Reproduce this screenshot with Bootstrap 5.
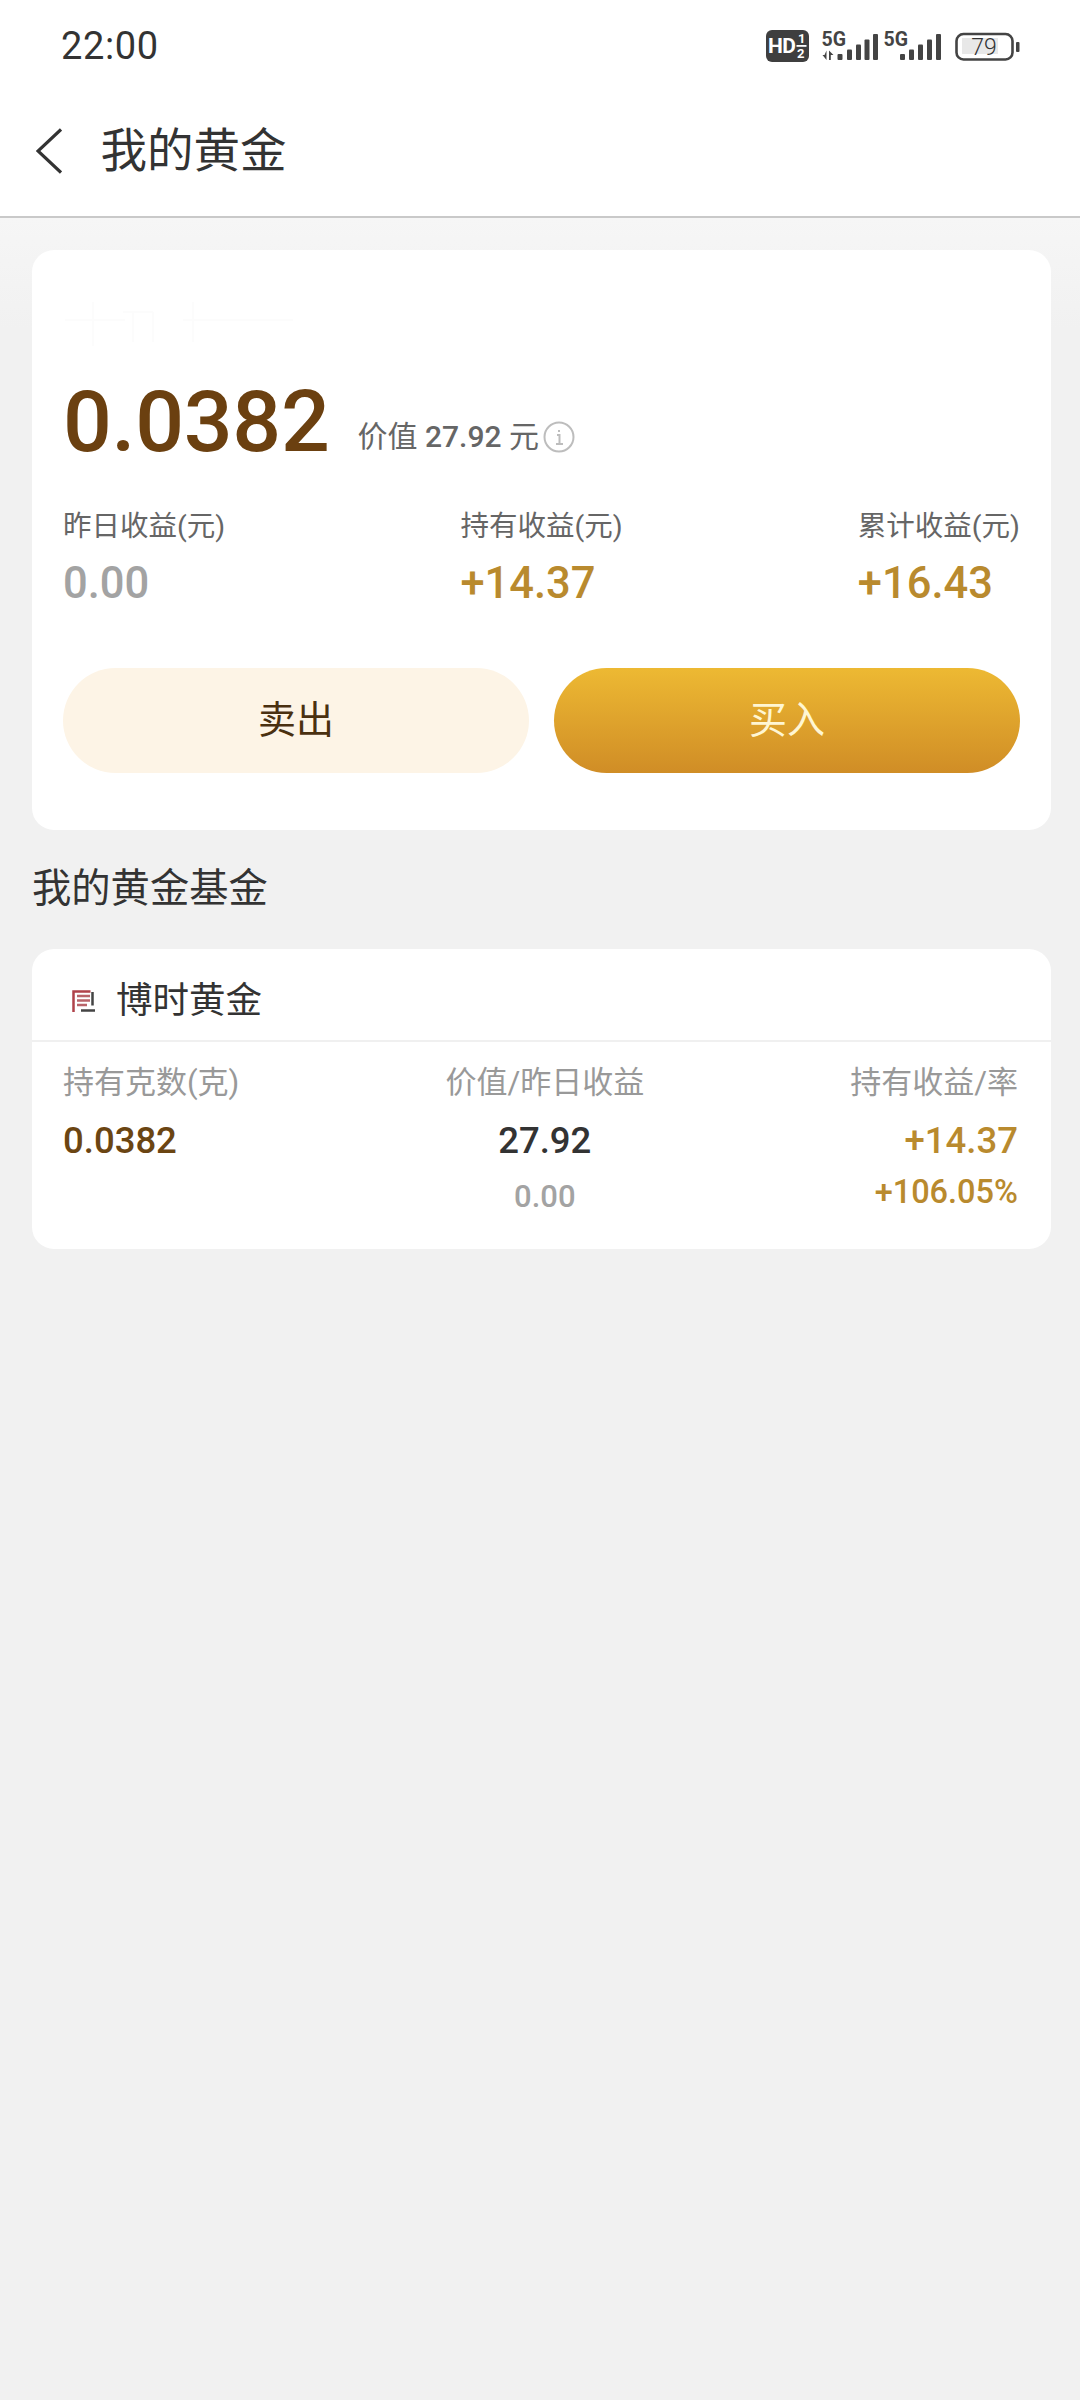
<!DOCTYPE html>
<html lang="zh-CN">
<head>
<meta charset="utf-8">
<meta name="viewport" content="width=device-width, initial-scale=1">
<link href="https://cdn.jsdelivr.net/npm/bootstrap@5.3.0/dist/css/bootstrap.min.css" rel="stylesheet">
<style>
html,body{background:#f1f1f1}
body{font-family:Roboto,"Noto Sans CJK SC",sans-serif;color:#333;width:1080px;min-height:2400px;line-height:1}
.top-zone{background:#fff;height:218px;border-bottom:2px solid #c9c9c9}
.status-line{height:92px;padding:0 60px 0 61px}
.clock{font-size:38px;color:#333;letter-spacing:.6px}
.title-line{height:124px;padding-left:36px;padding-bottom:6px;gap:38.5px}
.page-title{font-size:46.5px;color:#333;font-weight:400;margin:0;line-height:1}
.page-body{background:linear-gradient(#f6f6f6,#f1f1f1 110px);padding:32px 29px 0 32px}
.gold-panel{border:0;border-radius:22px;background:#fff;color:#333}
.panel-main{padding:50px 31px 38px 31px;height:580px}
.mist{height:48px;margin-bottom:37.6px}
.big-num{font-size:86px;font-weight:500;color:#6b4010;line-height:72px;letter-spacing:-.3px}
.big-side{font-size:30px;color:#666;line-height:36px;margin-left:28px;gap:4px;margin-bottom:3px}
.num-mid{font-weight:500}
.stat-row{margin-top:53.4px}
.stat-label{font-size:28.5px;color:#666;line-height:32px}
.stat-val{font-size:43.5px;font-weight:500;line-height:40px;margin-top:21px}
.tone-gray{color:#a3a3a3}.tone-gold{color:#b98a2e}.tone-brown{color:#6b4512}.tone-dark{color:#333}
.act-row{margin-top:64px;gap:25px}
.act-btn{flex:1 1 0;height:105px;border:0;font-size:38px;line-height:1;padding:0}
.act-sell,.act-sell:hover{background:#fdf4e6;color:#4a3010}
.act-buy,.act-buy:hover{background:linear-gradient(#edb933,#d08d26);color:#fff6d2}
.sec-title{font-size:39.3px;font-weight:400;color:#333;margin:39px 0 40px 0;line-height:40px}
.fund-head{height:93px;padding-left:40px;padding-top:14px;gap:21px;border-bottom:2px solid #f0f0f0}
.fund-name{font-size:36.5px;color:#333}
.fund-body{padding:25px 33px 0 31px;height:207px}
.fund-label{font-size:31px;color:#999;line-height:32px}
.fund-val{font-size:36.5px;font-weight:500;line-height:36px;margin-top:23.5px}
.fund-sub{font-size:32.5px;font-weight:500;line-height:36px;margin-top:15.5px}
.fund-sub-low{margin-top:20px;font-size:31px}
</style>
</head>
<body>
<div class="top-zone">
  <div class="status-line d-flex align-items-center justify-content-between">
    <span class="clock">22:00</span>
    <svg width="256" height="36" viewBox="763 27 256 36" role="img" aria-label="状态栏">
      <rect x="765" y="29" width="43" height="32" rx="6" fill="#3f3f3f"/>
      <text x="767" y="52" font-family="Roboto" font-weight="700" font-size="21" fill="#fff" letter-spacing="-.5">HD</text>
      <text x="797" y="42" font-family="Roboto" font-weight="700" font-size="13" fill="#fff">1</text>
      <rect x="795.500" y="44" width="10" height="1.800" fill="#fff"/>
      <text x="796" y="57" font-family="Roboto" font-weight="700" font-size="13" fill="#fff">2</text>
      <text x="820.500" y="45" font-family="Roboto" font-weight="700" font-size="19.500" fill="#444">5G</text>
      <g fill="#444">
        <path d="M825.500 49.500v9.500l-4-5h2zM828 49.500v9.500h1.800v-5h2.700z"/>
        <rect x="836.500" y="53" width="5" height="6" rx="1"/>
        <rect x="846" y="48.500" width="5" height="10.500" rx="1"/>
        <rect x="855" y="43.500" width="5" height="15.500" rx="1"/>
        <rect x="863.500" y="38.500" width="5" height="20.500" rx="1"/>
        <rect x="872" y="33" width="5" height="26" rx="1"/>
      </g>
      <text x="882.500" y="45" font-family="Roboto" font-weight="700" font-size="19.500" fill="#444">5G</text>
      <g fill="#444">
        <rect x="899" y="53" width="5" height="6" rx="1"/>
        <rect x="908" y="48.500" width="5" height="10.500" rx="1"/>
        <rect x="917" y="43.500" width="5" height="15.500" rx="1"/>
        <rect x="926" y="38.500" width="5" height="20.500" rx="1"/>
        <rect x="935" y="33" width="5" height="26" rx="1"/>
      </g>
      <rect x="955.500" y="33" width="56" height="25.500" rx="7" fill="none" stroke="#444" stroke-width="2.600"/>
      <rect x="961" y="37" width="36" height="16" fill="#e8e8e8"/>
      <rect x="1015" y="41" width="3.500" height="10" rx="1" fill="#444"/>
      <text x="983" y="54" text-anchor="middle" font-family="Roboto" font-weight="300" font-size="23" fill="#333">79</text>
    </svg>
  </div>
  <div class="title-line d-flex align-items-center">
    <svg width="26" height="46" viewBox="0 0 26 46" fill="none" stroke="#333" stroke-width="3.200"><path d="M25 1.500L2 23l23 21.500"/></svg>
    <h1 class="page-title">我的黄金</h1>
  </div>
</div>
<main class="page-body">
  <section class="card gold-panel panel-main">
    <svg class="mist d-block" width="240" height="48" viewBox="0 0 240 48" fill="none" stroke="#fcfcfc" stroke-width="2"><path d="M2 20h60M30 2v44M60 12h30M70 12v30M90 12v30M130 2v40M120 20h50M170 20h60"/></svg>
    <div class="d-flex align-items-end">
      <span class="big-num">0.0382</span>
      <div class="big-side d-flex align-items-center">
        <span>价值 <span class="num-mid">27.92</span> 元</span>
        <svg width="32" height="32" viewBox="0 0 32 32" fill="none" stroke="#bdbdbd" stroke-width="2"><circle cx="16" cy="16" r="14.500"/><path d="M14 14h2.500v9M13 23h7M16 9v2"/></svg>
      </div>
    </div>
    <div class="stat-row d-flex justify-content-between">
      <div><div class="stat-label">昨日收益(元)</div><div class="stat-val tone-gray">0.00</div></div>
      <div><div class="stat-label">持有收益(元)</div><div class="stat-val tone-gold">+14.37</div></div>
      <div><div class="stat-label">累计收益(元)</div><div class="stat-val tone-gold">+16.43</div></div>
    </div>
    <div class="act-row d-flex">
      <button type="button" class="btn rounded-pill act-btn act-sell">卖出</button>
      <button type="button" class="btn rounded-pill act-btn act-buy">买入</button>
    </div>
  </section>
  <h2 class="sec-title">我的黄金基金</h2>
  <section class="card gold-panel">
    <div class="fund-head d-flex align-items-center">
      <svg width="23" height="23" viewBox="0 0 23 23" fill="none" stroke-width="2.500"><path d="M1.500 22V1.500h17" stroke="#b0424a"/><path d="M5 6h13M5 10.500h13M5 15h10" stroke="#b9646a"/><path d="M20.500 2v13.500M9 20.500h14" stroke="#444"/></svg>
      <span class="fund-name">博时黄金</span>
    </div>
    <div class="fund-body d-flex justify-content-between">
      <div>
        <div class="fund-label">持有克数(克)</div>
        <div class="fund-val tone-brown">0.0382</div>
      </div>
      <div class="text-center">
        <div class="fund-label">价值/昨日收益</div>
        <div class="fund-val tone-dark">27.92</div>
        <div class="fund-sub fund-sub-low tone-gray">0.00</div>
      </div>
      <div class="text-end">
        <div class="fund-label">持有收益/率</div>
        <div class="fund-val tone-gold">+14.37</div>
        <div class="fund-sub tone-gold">+106.05%</div>
      </div>
    </div>
  </section>
</main>
<script src="https://cdn.jsdelivr.net/npm/bootstrap@5.3.0/dist/js/bootstrap.bundle.min.js"></script>
</body>
</html>
